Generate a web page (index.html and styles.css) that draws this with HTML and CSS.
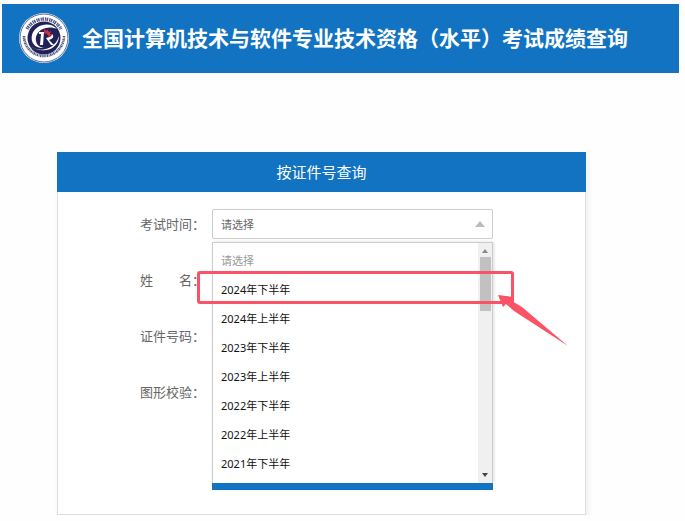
FILE: index.html
```html
<!DOCTYPE html>
<html lang="zh-CN">
<head>
<meta charset="utf-8">
<meta name="viewport" content="width=device-width, initial-scale=1">
<title>考试成绩查询</title>
<link rel="stylesheet" href="styles.css">
</head>
<body>
<header class="banner">
  <svg class="logo" viewBox="0 0 52 52" aria-hidden="true">
    <circle cx="26" cy="26" r="25" fill="#fff"/>
    <circle cx="26" cy="26" r="24" fill="none" stroke="#39436f" stroke-width=".8"/>
    <path d="M9 17a19.500 19.500 0 0 1 34 0" fill="none" stroke="#4d5580" stroke-width="3.400" stroke-dasharray="1.200 .5 1.600 1"/>
    <path d="M6 24a20 20 0 1 0 40 0" fill="none" stroke="#4d5580" stroke-width="2.600" stroke-dasharray="1.400 .6 .8 .6"/>
    <circle cx="26" cy="26" r="16.500" fill="#202257"/>
    <path d="M39 17C32 9 17 12 14 23c-2 8 4 14 12 13-6-1-9-5-8-11 2-8 12-12 21-8z" fill="#fff"/>
    <path d="M12 34c9 7 25 4 29-10 0 7-5 13-13 14-7 1-12-1-16-4z" fill="#fff"/>
    <path d="M21 20h5l-1 13h-3l1-11h-2zM28 26c4-1 6-2 6-4 3 3 0 5-3 6l5 5h-3z" fill="#fff"/>
    <path d="M26 17l3 2 0-2 2 3 2-1-1 3 2 0-3 3-2-3-3-1z" fill="#d52b42"/>
  </svg>
  <h1 class="banner-title">全国计算机技术与软件专业技术资格（水平）考试成绩查询</h1>
</header>
<main class="card">
  <h2 class="card-title">按证件号查询</h2>
  <form class="form">
    <div class="row">
      <label class="label" for="exam">考试时间：</label>
      <div class="field">
        <select class="control" id="exam"><option>请选择</option></select>
        <svg class="caret" viewBox="0 0 10 6" aria-hidden="true"><path d="M0 6L5 0l5 6z"/></svg>
        <div class="popup">
          <ul class="options" role="listbox" aria-label="考试时间">
            <li class="option placeholder" role="option">请选择</li>
            <li class="option" role="option">2024年下半年</li>
            <li class="option" role="option">2024年上半年</li>
            <li class="option" role="option">2023年下半年</li>
            <li class="option" role="option">2023年上半年</li>
            <li class="option" role="option">2022年下半年</li>
            <li class="option" role="option">2022年上半年</li>
            <li class="option" role="option">2021年下半年</li>
          </ul>
          <div class="scrollbar" aria-hidden="true">
            <svg class="step" viewBox="0 0 6 4"><path d="M0 4l3-4 3 4z"/></svg>
            <div class="thumb"></div>
            <svg class="step down" viewBox="0 0 6 4"><path d="M0 0h6L3 4z"/></svg>
          </div>
        </div>
        <div class="highlight"></div>
        <svg class="arrow" viewBox="0 0 70 52" aria-hidden="true"><path d="M0 0l15 2-1 4 10 6 46 39L16 16 8 9l-3 3z"/></svg>
      </div>
    </div>
    <div class="row">
      <label class="label" for="name">姓　　名：</label>
      <div class="field"><input class="control" id="name" type="text"></div>
    </div>
    <div class="row">
      <label class="label" for="number">证件号码：</label>
      <div class="field"><input class="control" id="number" type="text"></div>
    </div>
    <div class="row">
      <label class="label" for="captcha">图形校验：</label>
      <div class="field"><input class="control" id="captcha" type="text"></div>
    </div>
    <button class="submit" type="submit" aria-label="查询"></button>
  </form>
</main>
</body>
</html>
```
FILE: styles.css
```css
* { box-sizing: border-box; }

body {
  margin: 0;
  padding: 4px 6px 0 2px;
  background: #fefefe;
  color: #666;
  font: 13px/20px "Noto Sans", "Noto Sans CJK SC", sans-serif;
}

.banner {
  display: flex;
  align-items: center;
  gap: 12px;
  padding: 8px 16px 9px;
  background: #1173c2;
}

.logo {
  flex: none;
  width: 52px;
  height: 52px;
}

.banner-title {
  margin: 0;
  color: #fff;
  font-size: 21px;
  line-height: 30px;
  white-space: nowrap;
}

.card {
  margin: 79px 93px 0 55px;
  border: 1px solid #dedede;
  border-top: 0;
  background: #fff;
  box-shadow: 2px 6px 6px #eee;
}

.card-title {
  margin: 0 -1px;
  padding: 10px;
  background: #1173c2;
  color: #fff;
  font-size: 15px;
  font-weight: 400;
  line-height: 20px;
  text-align: center;
}

.form {
  display: flex;
  flex-direction: column;
  gap: 26px;
  padding: 17px 92px 24px 82px;
}

.row {
  display: flex;
  align-items: center;
}

.label {
  flex: none;
  width: 72px;
  white-space: nowrap;
}

.field {
  position: relative;
  flex: 1;
}

.control {
  display: block;
  width: 100%;
  height: 30px;
  padding: 2px 8px 0;
  appearance: none;
  border: 1px solid #ccc;
  border-radius: 2px;
  background: #fff;
  color: #666;
  font: inherit;
  font-size: 11px;
}

.caret {
  position: absolute;
  top: 12px;
  right: 8px;
  width: 10px;
  height: 6px;
  fill: #bbb;
}

.popup {
  position: absolute;
  z-index: 1;
  top: 33px;
  left: 0;
  right: 0;
  display: flex;
  border: 1px solid #ccc;
  border-bottom: 0;
  background: #fff;
  box-shadow: 1px 0 3px #ddd;
}

.options {
  flex: 1;
  margin: 0;
  padding: 3px 8px 5px;
  list-style: none;
}

.option {
  color: #111;
  font-size: 11px;
  line-height: 29px;
}

.placeholder { color: #999; }

.scrollbar {
  display: flex;
  flex-direction: column;
  align-items: center;
  width: 14px;
  padding: 6px 0;
  background: #f0f0f0;
}

.step {
  width: 6px;
  height: 4px;
  fill: #888;
}

.thumb {
  width: 11px;
  height: 54px;
  margin-top: 4px;
  background: #c1c1c1;
}

.down {
  margin-top: auto;
  fill: #444;
}

.highlight {
  position: absolute;
  z-index: 2;
  top: 62px;
  left: -15px;
  right: -21px;
  height: 33px;
  border: 3px solid #fb5266;
  border-radius: 3px;
}

.arrow {
  position: absolute;
  z-index: 3;
  top: 86px;
  right: -75px;
  width: 70px;
  height: 52px;
  fill: #fb5266;
}

.submit {
  position: relative;
  z-index: 2;
  height: 7px;
  margin: 50px 0 0 72px;
  border: 0;
  background: #1173c2;
}
```
